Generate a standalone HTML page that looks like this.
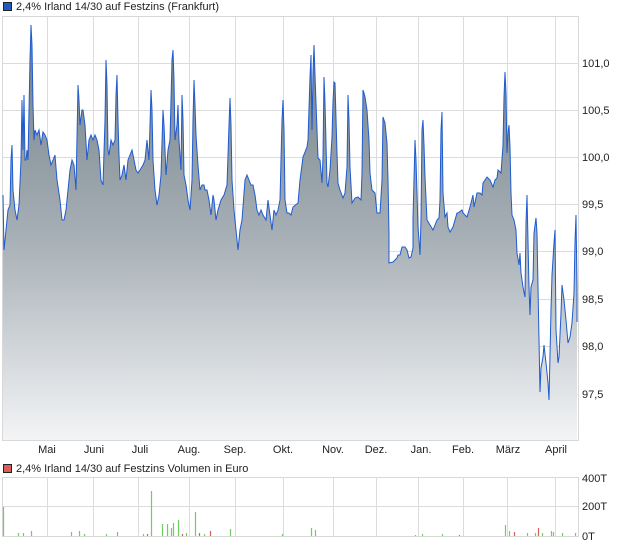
<!DOCTYPE html>
<html><head><meta charset="utf-8"><style>
html,body{margin:0;padding:0;background:#fff;}
body{width:620px;height:546px;overflow:hidden;font-family:"Liberation Sans",sans-serif;}
text{font-family:"Liberation Sans",sans-serif;font-size:11px;fill:#222;}
</style></head><body>
<svg width="620" height="546" viewBox="0 0 620 546" xmlns="http://www.w3.org/2000/svg">
<defs><linearGradient id="g" x1="0" y1="0" x2="0" y2="1">
<stop offset="0" stop-color="#707d86"/><stop offset="0.5" stop-color="#a5aeb4"/><stop offset="1" stop-color="#f3f4f6"/></linearGradient></defs>
<rect x="3.5" y="2.5" width="8" height="8" fill="#1f5bbf" stroke="#222" stroke-width="1"/>
<text x="16" y="10">2,4% Irland 14/30 auf Festzins (Frankfurt)</text>
<rect x="2.5" y="16.5" width="576" height="424" fill="none" stroke="#d8d8d8"/>
<g stroke="#dcdcdc" stroke-width="1">
<path d="M47.5 17V440M93.5 17V440M138.5 17V440M189.5 17V440M235.5 17V440M283.5 17V440M333.5 17V440M376.5 17V440M418.5 17V440M463.5 17V440M507.5 17V440M555.5 17V440"/>
<path d="M3 63.5H578M3 110.5H578M3 157.5H578M3 204.5H578M3 251.5H578M3 299.5H578M3 346.5H578M3 394.5H578"/>
</g>
<path fill="url(#g)" stroke="none" d="M3 195 L4 250 6 230 8 210 10 205 11 160 12 145 13 190 15 210 17 220 19 205 21 160 22 100 23 150 24 95 25 160 26 160 27 150 28 160 30 60 31 25 32 45 33 105 34 140 35 130 37 135 39 130 41 145 43 132 45 135 47 140 49 155 51 165 53 160 55 155 57 180 60 200 62 220 64 220 66 210 68 190 70 170 72 160 74 165 76 190 78 85 79 100 80 125 82 110 83 110 85 125 87 160 89 140 91 135 93 140 95 135 97 140 99 150 101 180 103 185 105 120 106 60 107 85 108 150 109 155 111 140 113 145 115 140 116 95 117 75 118 120 119 155 120 180 122 175 124 165 126 180 128 160 130 155 132 150 134 160 136 170 138 173 140 170 143 165 145 160 147 140 149 160 151 90 152 110 153 160 155 190 157 205 159 195 161 175 163 110 164 125 166 175 168 150 170 140 171 100 172 60 173 50 174 80 175 140 177 125 178 105 179 140 181 170 182 95 183 120 184 175 186 185 188 200 190 210 192 180 193 120 194 80 195 105 196 135 198 165 200 190 202 185 204 185 205 190 207 190 209 200 211 215 213 195 214 200 216 220 218 210 221 200 224 195 227 185 229 125 230 98 231 125 232 180 234 210 236 230 238 250 240 230 242 220 245 180 247 175 249 180 251 185 253 185 255 195 257 210 259 215 261 210 263 215 266 220 268 200 270 215 272 230 274 210 276 215 278 210 280 200 282 120 283 100 284 130 285 200 287 213 289 213 291 215 293 207 298 203 300 180 303 157 307 147 308 140 310 77 311 55 312 130 313 73 314 45 315 75 317 130 318 158 320 160 322 183 323 157 324 77 325 103 327 183 328 187 330 170 332 137 333 102 334 82 335 83 337 153 338 183 340 190 343 198 345 193 347 167 348 95 349 120 350 167 352 203 355 198 358 197 361 200 362 173 363 90 364 93 365 97 367 110 369 140 370 173 372 190 375 193 377 213 380 213 382 180 383 117 385 123 387 143 388 180 389 233 389 263 393 262 397 258 398 255 400 255 402 247 405 247 407 250 409 258 411 257 413 248 413 218 415 140 416 160 417 193 418 227 419 240 420 255 421 220 422 130 423 120 424 145 425 177 427 220 430 225 433 230 437 220 439 218 440 200 441 130 442 112 443 193 445 217 447 213 448 227 450 232 453 227 457 213 458 213 462 210 463 213 467 217 470 207 473 195 474 207 477 193 480 193 482 195 483 183 487 177 490 180 493 187 495 180 497 178 498 170 501 173 503 145 504 97 505 72 506 93 507 153 508 133 509 125 510 147 511 193 512 215 514 220 516 230 517 253 519 265 520 253 521 273 523 287 525 297 526 223 527 195 529 287 530 315 531 287 533 280 534 233 536 218 537 233 538 287 540 392 541 368 543 357 544 345 546 363 548 383 549 400 551 310 552 275 554 243 555 230 556 330 558 363 559 357 561 313 562 285 564 300 566 320 568 343 570 337 572 323 574 293 575 242 576 215 577 287 577 322 L577 440 L3 440 Z"/>
<path fill="none" stroke="#1f5bcf" stroke-width="1" d="M3 195 L4 250 6 230 8 210 10 205 11 160 12 145 13 190 15 210 17 220 19 205 21 160 22 100 23 150 24 95 25 160 26 160 27 150 28 160 30 60 31 25 32 45 33 105 34 140 35 130 37 135 39 130 41 145 43 132 45 135 47 140 49 155 51 165 53 160 55 155 57 180 60 200 62 220 64 220 66 210 68 190 70 170 72 160 74 165 76 190 78 85 79 100 80 125 82 110 83 110 85 125 87 160 89 140 91 135 93 140 95 135 97 140 99 150 101 180 103 185 105 120 106 60 107 85 108 150 109 155 111 140 113 145 115 140 116 95 117 75 118 120 119 155 120 180 122 175 124 165 126 180 128 160 130 155 132 150 134 160 136 170 138 173 140 170 143 165 145 160 147 140 149 160 151 90 152 110 153 160 155 190 157 205 159 195 161 175 163 110 164 125 166 175 168 150 170 140 171 100 172 60 173 50 174 80 175 140 177 125 178 105 179 140 181 170 182 95 183 120 184 175 186 185 188 200 190 210 192 180 193 120 194 80 195 105 196 135 198 165 200 190 202 185 204 185 205 190 207 190 209 200 211 215 213 195 214 200 216 220 218 210 221 200 224 195 227 185 229 125 230 98 231 125 232 180 234 210 236 230 238 250 240 230 242 220 245 180 247 175 249 180 251 185 253 185 255 195 257 210 259 215 261 210 263 215 266 220 268 200 270 215 272 230 274 210 276 215 278 210 280 200 282 120 283 100 284 130 285 200 287 213 289 213 291 215 293 207 298 203 300 180 303 157 307 147 308 140 310 77 311 55 312 130 313 73 314 45 315 75 317 130 318 158 320 160 322 183 323 157 324 77 325 103 327 183 328 187 330 170 332 137 333 102 334 82 335 83 337 153 338 183 340 190 343 198 345 193 347 167 348 95 349 120 350 167 352 203 355 198 358 197 361 200 362 173 363 90 364 93 365 97 367 110 369 140 370 173 372 190 375 193 377 213 380 213 382 180 383 117 385 123 387 143 388 180 389 233 389 263 393 262 397 258 398 255 400 255 402 247 405 247 407 250 409 258 411 257 413 248 413 218 415 140 416 160 417 193 418 227 419 240 420 255 421 220 422 130 423 120 424 145 425 177 427 220 430 225 433 230 437 220 439 218 440 200 441 130 442 112 443 193 445 217 447 213 448 227 450 232 453 227 457 213 458 213 462 210 463 213 467 217 470 207 473 195 474 207 477 193 480 193 482 195 483 183 487 177 490 180 493 187 495 180 497 178 498 170 501 173 503 145 504 97 505 72 506 93 507 153 508 133 509 125 510 147 511 193 512 215 514 220 516 230 517 253 519 265 520 253 521 273 523 287 525 297 526 223 527 195 529 287 530 315 531 287 533 280 534 233 536 218 537 233 538 287 540 392 541 368 543 357 544 345 546 363 548 383 549 400 551 310 552 275 554 243 555 230 556 330 558 363 559 357 561 313 562 285 564 300 566 320 568 343 570 337 572 323 574 293 575 242 576 215 577 287 577 322"/>
<g text-anchor="start">
<text x="582" y="67">101,0</text><text x="582" y="114">100,5</text><text x="582" y="161">100,0</text><text x="582" y="208">99,5</text><text x="582" y="255">99,0</text><text x="582" y="303">98,5</text><text x="582" y="350">98,0</text><text x="582" y="398">97,5</text>
</g>
<g text-anchor="middle">
<text x="47" y="453">Mai</text><text x="94" y="453">Juni</text><text x="140" y="453">Juli</text><text x="189" y="453">Aug.</text><text x="235" y="453">Sep.</text><text x="283" y="453">Okt.</text><text x="333" y="453">Nov.</text><text x="376" y="453">Dez.</text><text x="421" y="453">Jan.</text><text x="463" y="453">Feb.</text><text x="508" y="453">März</text><text x="556" y="453">April</text>
</g>
<rect x="3.5" y="464.5" width="8" height="8" fill="#d9605a" stroke="#222" stroke-width="1"/>
<text x="16" y="472">2,4% Irland 14/30 auf Festzins Volumen in Euro</text>
<rect x="2.5" y="477.5" width="576" height="59" fill="none" stroke="#d8d8d8"/>
<g stroke="#dcdcdc"><path d="M47.5 478V536M93.5 478V536M138.5 478V536M189.5 478V536M235.5 478V536M283.5 478V536M333.5 478V536M376.5 478V536M418.5 478V536M463.5 478V536M507.5 478V536M555.5 478V536M3 506.5H578"/></g>
<g stroke="#6ccf5f" stroke-width="1.2">
<path d="M3.5 507V536M18.5 533V536M23.5 533V536M31.5 531V536M71.5 532V536M79.5 531V536M84.5 534V536M106.5 534V536M117.5 532V536M143.5 534V536M151.5 491V536M162.5 524V536M167.5 524V536M171.5 528V536M173.5 523V536M178.5 520V536M186.5 533V536M195.5 512V536M204.5 534V536M230.5 529V536M282.5 534V536M311.5 528V536M315.5 530V536M415.5 535V536M422.5 534V536M442.5 534V536M505.5 525V536M509.5 531V536M527.5 533V536M535.5 533V536M542.5 533V536M551.5 531V536M553.5 532V536M562.5 533V536M575.5 533V536"/>
</g>
<g stroke="#d9605a" stroke-width="1.2"><path d="M147.5 534V536M182.5 534V536M199.5 533V536M210.5 531V536M459.5 535V536M514.5 532V536M538.5 528V536"/></g>
<text x="582" y="482">400T</text><text x="582" y="510">200T</text><text x="582" y="540">0T</text>
</svg>
</body></html>
